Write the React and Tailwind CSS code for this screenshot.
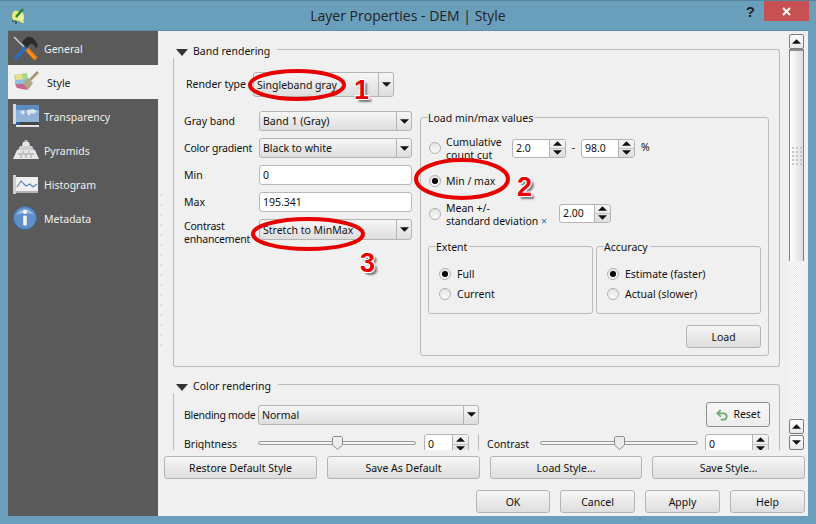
import React from 'react';
import { Undo2 } from 'lucide-react';

const btnFace = 'bg-gradient-to-b from-[#f6f6f6] to-[#dedede] border border-[#b4b4b4] rounded-[3px]';
const rowLabel = 'w-[75px] shrink-0 mt-[2px] text-[#111] whitespace-nowrap';

const Arrow = ({ up = false, w = 9, h = 5, className = '' }) => (
    <svg width={w} height={h} viewBox="0 0 10 5" className={className}>
        <path d={up ? 'M0 5 L5 0 L10 5 Z' : 'M0 0 L10 0 L5 5 Z'} fill="#111" />
    </svg>
);

const Combo = ({ label, className = '', arrowW = 'w-[15px]' }) => (
    <div className={`flex items-stretch shrink-0 ${btnFace} ${className}`}>
        <div className="flex-1 flex items-center pl-[3px] pt-[2px] text-[#111]">{label}</div>
        <div className={`${arrowW} border-l border-[#b4b4b4] flex items-center justify-center`}>
            <Arrow />
        </div>
    </div>
);

const TextField = ({ value }) => (
    <div className="w-[153px] h-[20px] bg-white border border-[#b8b8b8] rounded-[3px] flex items-center pl-[3px] pt-[2px] text-[#111]">
        {value}
    </div>
);

const Spin = ({ value, className = '' }) => (
    <div className={`flex shrink-0 h-[19px] bg-white border border-[#b4b4b4] rounded-[3px] overflow-hidden ${className}`}>
        <div className="flex-1 flex items-center pl-[3px] pt-[2px] text-[#111]">{value}</div>
        <div className={`w-[16px] flex flex-col border-l border-[#b4b4b4] ${btnFace} border-y-0 border-r-0 rounded-none`}>
            <div className="flex-1 flex items-center justify-center border-b border-[#c4c4c4]"><Arrow up /></div>
            <div className="flex-1 flex items-center justify-center"><Arrow /></div>
        </div>
    </div>
);

const Radio = ({ checked = false }) => (
    <div className="w-[12px] h-[12px] rounded-full shrink-0 border border-[#b0b0b0] bg-gradient-to-b from-[#e4e4e4] to-[#fafafa] flex items-center justify-center">
        {checked && <div className="w-[6px] h-[6px] rounded-full bg-black" />}
    </div>
);

const RadioRow = ({ label, checked }) => (
    <div className="h-[20px] flex items-center gap-[6px] text-[#111]">
        <Radio checked={checked} />
        <span className="mt-[2px]">{label}</span>
    </div>
);

const PushButton = ({ children, className = '' }) => (
    <div className={`h-[23px] pt-[2px] flex items-center justify-center text-[#111] ${btnFace} ${className}`}>{children}</div>
);

const Slider = ({ className = '' }) => (
    <div className={`relative h-[4px] bg-[#f4f4f4] border border-[#9a9a9a] rounded-full shrink-0 ${className}`}>
        <svg width="11" height="14" viewBox="0 0 11 14" className="absolute left-[73px] top-[-6px]">
            <path d="M1.5 .5 H9.5 L10.5 1.5 V9 L5.5 13.5 L.5 9 V1.5 Z" fill="#ececec" stroke="#8c8c8c" />
        </svg>
    </div>
);

const GroupHeader = ({ title }) => (
    <div className="h-[16px] pt-[4px] flex items-center text-[#111]">
        <svg width="12" height="7" viewBox="0 0 12 7" className="ml-[3px] shrink-0">
            <path d="M0 0 H12 L6 7 Z" fill="#333" />
        </svg>
        <span className="ml-[5px] mr-[7px] whitespace-nowrap">{title}</span>
        <div className="flex-1 self-end h-[9px] border-t border-r border-[#bcbcbc] rounded-tr-[3px]" />
    </div>
);

const Fieldset = ({ title, className = '', children }) => (
    <fieldset className={`border border-[#bcbcbc] rounded-[3px] shrink-0 ${className}`}>
        <legend className="ml-[7px] pr-[2px] h-[14px] leading-[16px] text-[#111]">{title}</legend>
        {children}
    </fieldset>
);

const GeneralIcon = () => (
    <svg width="25" height="25" viewBox="0 0 25 25">
        <path d="M1 1 L12 12" stroke="#c8c8c8" strokeWidth="1.6" />
        <path d="M13 12 L23 23" stroke="#ef7a12" strokeWidth="4.4" />
        <path d="M15 15 L22 22.5" stroke="#ffb060" strokeWidth="1" />
        <path d="M2 23 L14 10" stroke="#2f6cb3" strokeWidth="4" />
        <path d="M9 6 L14 1 C19 0 23 4 25 10 L23 12 C21 8 19 7 17 8 L14 12 Z" fill="#2b2b2b" />
    </svg>
);

const StyleIcon = () => (
    <svg width="26" height="22" viewBox="0 0 26 22">
        <path d="M1 4 L14 2 L15 8 L2 9 Z" fill="#9fd68e" />
        <path d="M2 9 L15 8 L15 13 L2 13 Z" fill="#8fbede" />
        <path d="M2 13 L15 13 L14 19 L4 17 Z" fill="#c9668f" />
        <path d="M2 4 L9 3 L10 8 L3 9 Z" fill="#e8e08a" />
        <path d="M10 12 L15 7 L20 12 L15 19 Z" fill="#aea788" />
        <path d="M17 9 L25 1" stroke="#a09870" strokeWidth="2.6" />
    </svg>
);

const TransparencyIcon = () => (
    <svg width="26" height="24" viewBox="0 0 26 24">
        <rect x="0" y="0" width="3" height="20" fill="#d8d8d8" />
        <rect x="3" y="1" width="23" height="17" fill="#8fb2d8" />
        <rect x="3" y="1" width="23" height="5" fill="#5f8cc0" />
        <path d="M7 8 L10 6 L12 8 L10 11 Z M14 6 L20 5 L24 7 L21 10 L18 9 L16 12 L14 9 Z" fill="#dbe4ec" />
        <rect x="3" y="18" width="23" height="3" fill="#444" />
        <rect x="3" y="18" width="4" height="4" fill="#2a5ea5" />
        <rect x="3" y="21" width="23" height="2" fill="#e4e4e4" />
    </svg>
);

const PyramidIcon = () => (
    <svg width="26" height="20" viewBox="0 0 26 20">
        <path d="M0 19 L4 10 H22 L26 19 Z" fill="#e6e6e6" />
        <path d="M5 10 L7 6 H19 L21 10 Z" fill="#cfcfcf" />
        <path d="M9 6 L10 2 H16 L17 6 Z" fill="#e6e6e6" />
        <path d="M11 2 L12 0 H14 L15 2 Z" fill="#bdbdbd" />
        <path d="M5 14 H21 M10 11 V13 M16 11 V13 M8 15 V18 M13 15 V18 M18 15 V18" stroke="#9a9a9a" strokeWidth="1" />
    </svg>
);

const HistogramIcon = () => (
    <svg width="25" height="19" viewBox="0 0 25 19">
        <rect x="0" y="0" width="3" height="19" fill="#cfcfcf" />
        <rect x="3" y="2" width="22" height="14" fill="#efefef" />
        <rect x="3" y="16" width="22" height="2" fill="#b4b4b4" />
        <path d="M4 12 L8 6 L13 11 L17 9 L20 12 L24 9" fill="none" stroke="#5b84b8" strokeWidth="1.1" />
    </svg>
);

const InfoIcon = () => (
    <svg width="24" height="24" viewBox="0 0 24 24">
        <circle cx="12" cy="12" r="11.5" fill="#5f8fc9" stroke="#3d6aa5" />
        <path d="M3 9 Q12 -3 21 9 Q12 5 3 9 Z" fill="#9dbde2" />
        <circle cx="12" cy="6" r="2" fill="#fff" />
        <rect x="10.2" y="9.5" width="3.6" height="10" rx="1" fill="#f2f2f2" />
    </svg>
);

const LeafLogo = () => (
    <svg width="14" height="16" viewBox="0 0 14 16" className="ml-[11px] mt-[7px]">
        <ellipse cx="5" cy="8" rx="4" ry="5.5" fill="#e6ec7a" />
        <ellipse cx="10" cy="9" rx="3" ry="5" fill="#eef29a" />
        <path d="M5 9 L12 1" stroke="#1c8a2e" strokeWidth="2.4" />
        <path d="M1 13 H5 V16" fill="none" stroke="#23402a" strokeWidth="1.2" />
        <path d="M9 13 L13 14" stroke="#e6ec7a" strokeWidth="2" />
    </svg>
);

const navItems = [
    { label: 'General', icon: <GeneralIcon /> },
    { label: 'Style', icon: <StyleIcon />, active: true },
    { label: 'Transparency', icon: <TransparencyIcon /> },
    { label: 'Pyramids', icon: <PyramidIcon /> },
    { label: 'Histogram', icon: <HistogramIcon /> },
    { label: 'Metadata', icon: <InfoIcon /> },
];

const numberClass = "absolute text-[27px] leading-[30px] font-bold text-[#e60000] font-['Liberation_Sans',sans-serif] [text-shadow:1px_1px_0_#fff,-1px_-1px_0_#fff,1px_-1px_0_#fff,-1px_1px_0_#fff,3px_3px_2px_#777]";

const ScrollButton = ({ up }) => (
    <div className="h-[15px] w-[15px] shrink-0 bg-gradient-to-b from-white to-[#e8e8e8] border border-[#7d7d7d] rounded-[2px] flex items-center justify-center">
        <Arrow up={up} />
    </div>
);

const App = () => (
    <div className="relative w-[816px] h-[524px] overflow-hidden bg-[#6a9fbc] border-t border-[#56849e] flex flex-col text-[10.5px] font-['Noto_Sans','Open_Sans',sans-serif]">
        {/* title bar */}
        <div className="h-[29px] shrink-0 grid grid-cols-[1fr_auto_1fr]">
            <div><LeafLogo /></div>
            <div className="pt-[5px] text-[14px] leading-[20px] text-[#222] font-['Open_Sans',sans-serif]">Layer Properties - DEM | Style</div>
            <div className="flex justify-end items-start">
                <span className="mt-[1px] mr-[9px] text-[15px] leading-[20px] font-bold text-[#222] font-['Liberation_Sans',sans-serif]">?</span>
                <div className="w-[45px] h-[20px] mr-[7px] bg-[#c75050] flex items-center justify-center">
                    <svg width="9" height="9" viewBox="0 0 9 9">
                        <path d="M1 1 L8 8 M8 1 L1 8" stroke="#fff" strokeWidth="2" />
                    </svg>
                </div>
            </div>
        </div>

        <div className="mx-[8px] h-[486px] flex border-t border-[#5e90ad] bg-[#f0f0f0]">
            {/* sidebar */}
            <div className="w-[150px] shrink-0 bg-[#5a5a5a] flex flex-col">
                {navItems.map((item) => (
                    <div
                        key={item.label}
                        className={`h-[34px] shrink-0 flex items-center ${item.active ? 'bg-[#f0f0f0] text-[#222]' : 'text-[#f0f0f0]'}`}
                    >
                        <div className="w-[36px] shrink-0 pl-[5px] flex items-center">{item.icon}</div>
                        <span className={`mt-[4px] ${item.active ? 'ml-[3px]' : ''}`}>{item.label}</span>
                    </div>
                ))}
            </div>

            <div className="flex-1 flex flex-col min-w-0">
                <div className="h-[419px] shrink-0 flex overflow-hidden pl-[15px]">
                    <div className="w-[607px] shrink-0 flex flex-col pt-[11px]">
                        {/* band rendering */}
                        <GroupHeader title="Band rendering" />
                        <div className="h-[309px] shrink-0 flex border-x border-b border-[#bcbcbc] rounded-b-[3px] pl-[10px]">
                            <div className="w-[228px] shrink-0 flex flex-col">
                                <div className="mt-[14px] h-[25px] flex items-center">
                                    <span className="w-[69px] pl-[2px] shrink-0 text-[#111]">Render type</span>
                                    <Combo label="Singleband gray" className="w-[141px] h-[25px]" />
                                </div>
                                <div className="mt-[14px] flex flex-col gap-[7px]">
                                    <div className="h-[20px] flex items-center">
                                        <span className={rowLabel}>Gray band</span>
                                        <Combo label="Band 1 (Gray)" className="w-[153px] h-[20px]" />
                                    </div>
                                    <div className="h-[20px] flex items-center">
                                        <span className={`${rowLabel} tracking-[-0.2px]`}>Color gradient</span>
                                        <Combo label="Black to white" className="w-[153px] h-[20px]" />
                                    </div>
                                    <div className="h-[20px] flex items-center">
                                        <span className={rowLabel}>Min</span>
                                        <TextField value="0" />
                                    </div>
                                    <div className="h-[20px] flex items-center">
                                        <span className={rowLabel}>Max</span>
                                        <TextField value="195.341" />
                                    </div>
                                    <div className="h-[21px] flex items-center">
                                        <span className="w-[75px] shrink-0 text-[#111] leading-[13px] mt-[7px] tracking-[-0.2px]">Contrast<br />enhancement</span>
                                        <Combo label="Stretch to MinMax" className="w-[153px] h-[21px]" />
                                    </div>
                                </div>
                            </div>

                            {/* load min/max */}
                            <Fieldset title="Load min/max values" className="ml-[8px] mt-[52px] w-[349px] h-[246px]">
                                <div className="px-[7px]">
                                    <div className="mt-[11px] h-[26px] flex items-center text-[#111] pl-[1px]">
                                        <Radio />
                                        <span className="ml-[5px] w-[66px] mt-[2px] leading-[13px]">Cumulative<br />count cut</span>
                                        <Spin value="2.0" className="w-[54px]" />
                                        <span className="w-[15px] text-center">-</span>
                                        <Spin value="98.0" className="w-[54px]" />
                                        <span className="ml-[6px]">%</span>
                                    </div>
                                    <div className="mt-[10px] h-[20px] flex items-center text-[#111] pl-[1px]">
                                        <Radio checked />
                                        <span className="ml-[5px] mt-[2px]">Min / max</span>
                                    </div>
                                    <div className="mt-[10px] h-[26px] flex items-center text-[#111] pl-[1px]">
                                        <Radio />
                                        <span className="ml-[5px] w-[113px] mt-[2px] leading-[13px]">Mean +/-<br />standard deviation <span className="text-[#2a6fb0]">×</span></span>
                                        <Spin value="2.00" className="w-[52px] -mt-[2px]" />
                                    </div>
                                    <div className="mt-[12px] flex gap-[3px]">
                                        <Fieldset title="Extent" className="w-[165px] h-[75px]">
                                            <div className="mt-[11px] pl-[10px]">
                                                <RadioRow label="Full" checked />
                                                <RadioRow label="Current" />
                                            </div>
                                        </Fieldset>
                                        <Fieldset title="Accuracy" className="w-[165px] h-[75px]">
                                            <div className="mt-[11px] pl-[10px]">
                                                <RadioRow label="Estimate (faster)" checked />
                                                <RadioRow label="Actual (slower)" />
                                            </div>
                                        </Fieldset>
                                    </div>
                                    <div className="mt-[11px] flex justify-end">
                                        <PushButton className="w-[75px]">Load</PushButton>
                                    </div>
                                </div>
                            </Fieldset>
                        </div>

                        {/* color rendering */}
                        <div className="mt-[10px]">
                            <GroupHeader title="Color rendering" />
                        </div>
                        <div className="flex-1 border-x border-[#bcbcbc] pl-[10px] pr-[9px] text-[#111]">
                            <div className="mt-[9px] h-[25px] flex items-center">
                                <span className="w-[74px] shrink-0 mt-[2px] whitespace-nowrap tracking-[-0.3px]">Blending mode</span>
                                <Combo label="Normal" className="w-[221px] h-[20px]" />
                                <div className="ml-auto w-[64px] h-[25px] pt-[1px] flex items-center justify-center gap-[4px] bg-gradient-to-b from-[#f8f8f8] to-[#ececec] border border-[#8e8e8e] rounded-[3px]">
                                    <Undo2 size={14} strokeWidth={3} color="#6fa872" />
                                    Reset
                                </div>
                            </div>
                            <div className="mt-[7px] h-[20px] flex items-center">
                                <span className="w-[74px] shrink-0 mt-[2px]">Brightness</span>
                                <Slider className="w-[158px] -mt-[3px]" />
                                <Spin value="0" className="w-[45px] ml-[8px] h-[20px]" />
                                <div className="w-px h-[20px] bg-[#bcbcbc] ml-[9px]" />
                                <span className="ml-[8px] w-[53px] shrink-0 mt-[2px]">Contrast</span>
                                <Slider className="w-[158px] -mt-[3px]" />
                                <Spin value="0" className="w-[64px] ml-[7px] h-[20px]" />
                            </div>
                        </div>
                    </div>

                    {/* scrollbar */}
                    <div className="ml-[9px] w-[15px] shrink-0 flex flex-col pt-[3px]">
                        <ScrollButton up />
                        <div className="h-[212px] shrink-0 flex items-center justify-center border-x border-t-2 border-x-[#7d7d7d] border-t-[#8c8c8c] bg-gradient-to-r from-white to-[#dcdcdc]">
                            <div className="grid grid-cols-3 gap-[2px]">
                                {Array.from({ length: 15 }).map((_, i) => (
                                    <div key={i} className="w-[2px] h-[2px] bg-[#c4c4c4]" />
                                ))}
                            </div>
                        </div>
                        <div className="flex-1 bg-[repeating-conic-gradient(#e6e6e6_0_25%,#fff_0_50%)] bg-[length:2px_2px]" />
                        <ScrollButton up />
                        <div className="h-[1px] shrink-0" />
                        <ScrollButton />
                    </div>
                </div>

                {/* dialog buttons */}
                <div className="mt-[6px] pl-[6px] flex gap-[10px]">
                    <PushButton className="w-[153px]">Restore Default Style</PushButton>
                    <PushButton className="w-[153px]">Save As Default</PushButton>
                    <PushButton className="w-[152px]">Load Style...</PushButton>
                    <PushButton className="w-[153px]">Save Style...</PushButton>
                </div>
                <div className="mt-[11px] pr-[3px] flex justify-end gap-[10px]">
                    <PushButton className="w-[74px] border-[#6e6e6e]">OK</PushButton>
                    <PushButton className="w-[75px]">Cancel</PushButton>
                    <PushButton className="w-[75px]">Apply</PushButton>
                    <PushButton className="w-[75px]">Help</PushButton>
                </div>
            </div>
        </div>

        {/* splitter handle */}
        <div className="absolute left-[160px] top-[193px] flex flex-col gap-[7px]">
            {Array.from({ length: 16 }).map((_, i) => (
                <div key={i} className="w-[3px] h-[3px] bg-gradient-to-br from-[#cfcfcf] to-white" />
            ))}
        </div>

        {/* hand drawn annotations */}
        <svg width="816" height="524" className="absolute left-0 top-0 pointer-events-none">
            <g fill="none" stroke="#e60000" strokeWidth="4">
                <ellipse cx="297" cy="84" rx="47" ry="14" />
                <ellipse cx="308" cy="233" rx="55" ry="15" />
                <ellipse cx="462" cy="178" rx="46" ry="19" />
            </g>
        </svg>
        <span className={`${numberClass} left-[354px] top-[74px]`}>1</span>
        <span className={`${numberClass} left-[517px] top-[171px]`}>2</span>
        <span className={`${numberClass} left-[360px] top-[247px]`}>3</span>
    </div>
);

export default App;
